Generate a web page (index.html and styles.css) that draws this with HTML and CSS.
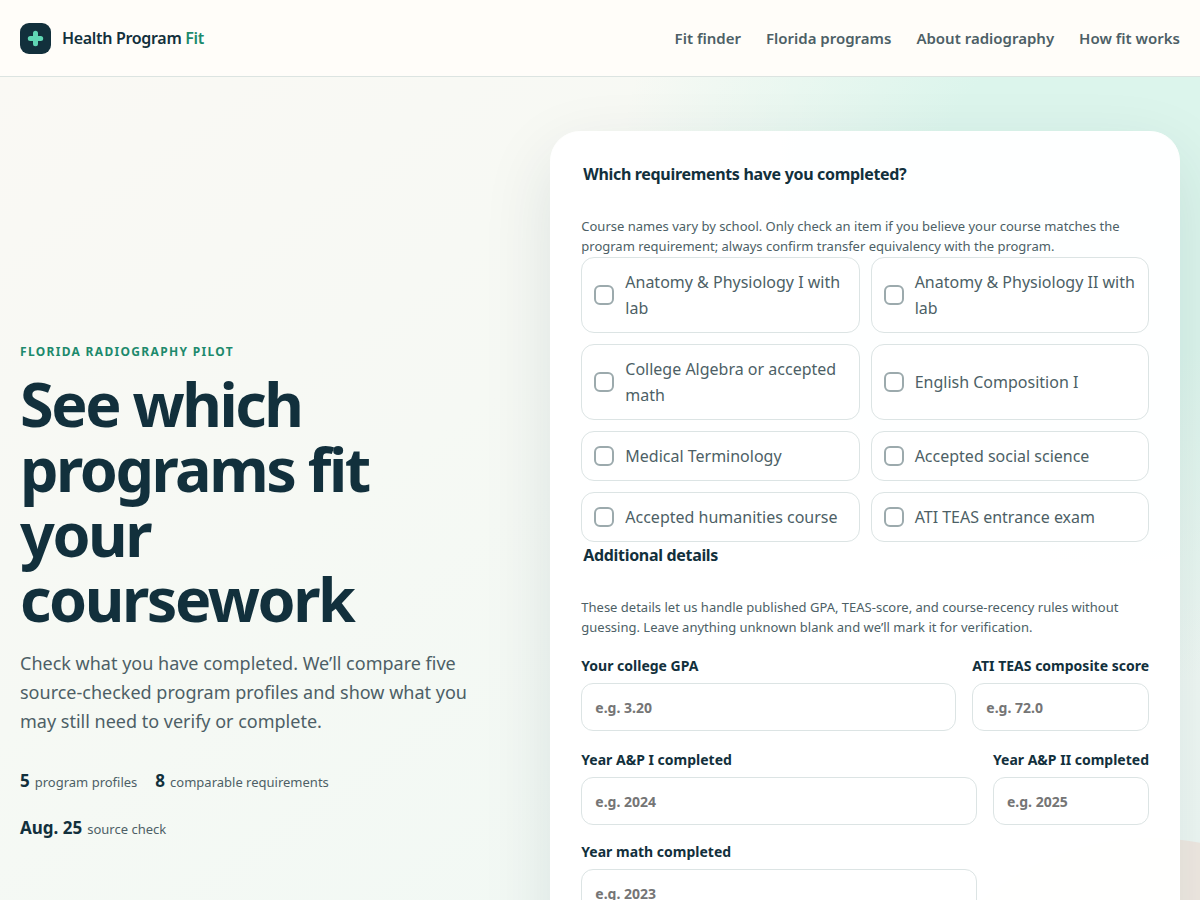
FILE: index.html
```html
<!DOCTYPE html>
<html lang="en">
<head>
<meta charset="utf-8">
<meta name="viewport" content="width=device-width, initial-scale=1">
<title>Health Program Fit</title>
<link rel="stylesheet" href="styles.css">
</head>
<body>
<header class="site-header">
  <a class="brand" href="#">
    <svg class="brand-mark" viewBox="0 0 31 31" aria-hidden="true">
      <rect width="31" height="31" rx="9" fill="#12303c"/>
      <path d="M15.5 10.3v10.4M10.3 15.5h10.4" stroke="#5fd6b4" stroke-width="5" stroke-linecap="round"/>
    </svg>
    <span>Health Program <span class="brand-accent">Fit</span></span>
  </a>
  <nav class="site-nav">
    <a href="#finder">Fit finder</a>
    <a href="#programs">Florida programs</a>
    <a href="#about">About radiography</a>
    <a href="#how">How fit works</a>
  </nav>
</header>
<main class="hero">
  <section class="intro">
    <p class="eyebrow">Florida radiography pilot</p>
    <h1 class="title">See which programs fit your coursework</h1>
    <p class="lead">Check what you have completed. We’ll compare five source-checked program profiles and show what you may still need to verify or complete.</p>
    <div class="stats">
      <span class="stat"><strong>5</strong> program profiles</span>
      <span class="stat"><strong>8</strong> comparable requirements</span>
      <span class="stat"><strong>Aug. 25</strong> source check</span>
    </div>
  </section>
  <form class="card" id="finder">
    <fieldset class="group">
      <legend>Which requirements have you completed?</legend>
      <p class="help">Course names vary by school. Only check an item if you believe your course matches the program requirement; always confirm transfer equivalency with the program.</p>
      <div class="options">
        <label class="option"><input type="checkbox"><span>Anatomy &amp; Physiology I with lab</span></label>
        <label class="option"><input type="checkbox"><span>Anatomy &amp; Physiology II with lab</span></label>
        <label class="option"><input type="checkbox"><span>College Algebra or accepted math</span></label>
        <label class="option"><input type="checkbox"><span>English Composition I</span></label>
        <label class="option"><input type="checkbox"><span>Medical Terminology</span></label>
        <label class="option"><input type="checkbox"><span>Accepted social science</span></label>
        <label class="option"><input type="checkbox"><span>Accepted humanities course</span></label>
        <label class="option"><input type="checkbox"><span>ATI TEAS entrance exam</span></label>
      </div>
    </fieldset>
    <fieldset class="group">
      <legend>Additional details</legend>
      <p class="help">These details let us handle published GPA, TEAS-score, and course-recency rules without guessing. Leave anything unknown blank and we’ll mark it for verification.</p>
      <div class="fields">
        <label class="field">Your college GPA<input type="text" placeholder="e.g. 3.20"></label>
        <label class="field">ATI TEAS composite score<input type="text" placeholder="e.g. 72.0"></label>
      </div>
      <div class="fields">
        <label class="field">Year A&amp;P I completed<input type="text" placeholder="e.g. 2024"></label>
        <label class="field">Year A&amp;P II completed<input type="text" placeholder="e.g. 2025"></label>
        <label class="field">Year math completed<input type="text" placeholder="e.g. 2023"></label>
      </div>
    </fieldset>
  </form>
</main>
</body>
</html>
```
FILE: styles.css
```css
* { box-sizing: border-box; }

body {
  margin: 0;
  background: #fffdf9;
  color: #12303c;
  font-family: "Noto Sans", sans-serif;
  font-size: 16px;
  line-height: 26px;
}

a { color: inherit; text-decoration: none; }

.site-header {
  display: flex;
  align-items: center;
  justify-content: space-between;
  min-height: 77px;
  padding: 0 20px;
  border-bottom: 1px solid #dce4e1;
}

.brand {
  display: flex;
  align-items: center;
  gap: 11px;
  font-weight: 600;
  letter-spacing: -0.02em;
}
.brand-mark { width: 31px; height: 31px; }
.brand-accent { color: #1d8a6c; }

.site-nav {
  display: flex;
  gap: 25px;
  color: #4d5f66;
  font-size: 15px;
  font-weight: 600;
}

.hero {
  position: relative;
  z-index: 0;
  overflow: hidden;
  display: grid;
  grid-template-columns: 3fr 4fr;
  gap: 58px;
  align-items: center;
  padding: 54px 20px;
  background:
    radial-gradient(circle at 92% 12%, #dcf5ec 0, #dcf5ec 12%, rgba(220, 245, 236, 0) 34%),
    linear-gradient(145deg, #faf9f4 0%, #f6f9f4 35%, #edf8f4 100%);
}
.hero::after {
  content: "";
  position: absolute;
  z-index: -1;
  right: -210px;
  bottom: -250px;
  width: 520px;
  height: 520px;
  border-radius: 50%;
  background: #f1eae2;
}

.eyebrow {
  margin: 0 0 9px;
  color: #1d8a6c;
  font-size: 12px;
  font-weight: 700;
  line-height: 20px;
  letter-spacing: 0.11em;
  text-transform: uppercase;
}
.title {
  margin: 0 0 18px;
  font-size: 61px;
  font-weight: 700;
  line-height: 65px;
  letter-spacing: -0.04em;
}
.lead {
  margin: 0 0 31px;
  color: #4d5f66;
  font-size: 18px;
  line-height: 29px;
}
.stats {
  display: flex;
  flex-wrap: wrap;
  gap: 18px;
  color: #4d5f66;
  font-size: 13px;
  line-height: 28px;
}
.stat {
  display: flex;
  align-items: baseline;
  gap: 5px;
}
.stat strong { color: #12303c; font-size: 17px; }

.card {
  padding: 29px 30px 136px;
  border: 1px solid #ffffff;
  border-radius: 30px;
  background: rgba(255, 255, 255, 0.96);
  box-shadow: 0 24px 70px rgba(18, 48, 60, 0.11);
}

.group { min-width: 0; margin: 0; padding: 0; border: 0; }
.group legend {
  padding: 0 2px;
  font-weight: 700;
  letter-spacing: -0.02em;
}

.help {
  margin: 29px 0 1px;
  color: #4d5f66;
  font-size: 13px;
  line-height: 20px;
}

.options {
  display: grid;
  grid-template-columns: 1fr 1fr;
  gap: 11px;
}
.option {
  display: flex;
  align-items: center;
  gap: 11px;
  padding: 11px 12px;
  border: 1px solid #dce4e4;
  border-radius: 13px;
  background: #ffffff;
  color: #4d5f66;
}
.option input {
  flex: none;
  width: 20px;
  height: 20px;
  margin: 0;
  border: 2px solid #9caaad;
  border-radius: 6px;
  appearance: none;
}
.option input:checked { border-color: #1d8a6c; background: #1d8a6c; }

.fields {
  display: grid;
  grid-template-columns: 1fr min-content;
  gap: 16px;
  margin-top: 18px;
}
.field {
  display: grid;
  gap: 6px;
  font-size: 14px;
  font-weight: 700;
  line-height: 22px;
  white-space: nowrap;
}
.field input {
  width: 100%;
  min-width: 0;
  height: 48px;
  padding: 0 13px;
  border: 1px solid #dce4e4;
  border-radius: 12px;
  background: #ffffff;
  color: inherit;
  font: inherit;
}
.field input::placeholder { color: #757575; }

@media (max-width: 900px) {
  .hero { grid-template-columns: 1fr; }
}
```
